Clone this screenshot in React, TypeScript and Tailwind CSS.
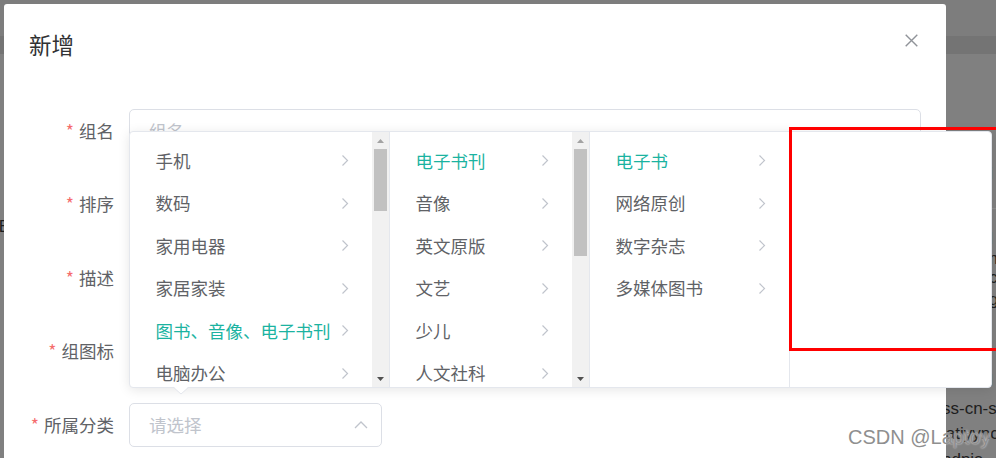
import React from 'react';

const cjk = "font-['Noto_Sans_CJK_SC','Noto_Sans',sans-serif]";

type Panel = {
  items: string[];
  active?: number;
  width: string;
  thumb?: string;
  last?: boolean;
};

const panels: Panel[] = [
  {
    items: ['手机', '数码', '家用电器', '家居家装', '图书、音像、电子书刊', '电脑办公', '汽车用品', '母婴'],
    active: 4,
    width: 'w-[260px]',
    thumb: 'h-[62px]',
  },
  {
    items: ['电子书刊', '音像', '英文原版', '文艺', '少儿', '人文社科', '经管励志'],
    active: 0,
    width: 'w-[200px]',
    thumb: 'h-[107px]',
  },
  {
    items: ['电子书', '网络原创', '数字杂志', '多媒体图书'],
    active: 0,
    width: 'w-[200px]',
  },
  { items: [], width: 'w-[201px]', last: true },
];

function ChevronRight() {
  return (
    <svg width="8" height="13" viewBox="0 0 8 13" className="shrink-0">
      <path d="M1.5 1.5 L6.5 6.5 L1.5 11.5" fill="none" stroke="#C0C4CC" strokeWidth="1.2" />
    </svg>
  );
}

function Scrollbar({ thumb }: { thumb: string }) {
  return (
    <div className="w-[17px] h-full bg-[#F1F1F1] flex flex-col shrink-0">
      <div className="h-[17px] flex items-center justify-center">
        <svg width="7" height="4" viewBox="0 0 7 4">
          <polygon points="0,4 7,4 3.5,0" fill="#A3A3A3" />
        </svg>
      </div>
      <div className={`${thumb} mx-[2px] bg-[#C1C1C1]`} />
      <div className="flex-1" />
      <div className="h-[17px] flex items-center justify-center">
        <svg width="7" height="4" viewBox="0 0 7 4">
          <polygon points="0,0 7,0 3.5,4" fill="#505050" />
        </svg>
      </div>
    </div>
  );
}

function CascaderPanel({ panel }: { panel: Panel }) {
  return (
    <div className={`${panel.width} h-full flex ${panel.last ? '' : 'border-r border-[#E4E7ED]'}`}>
      <div className="flex-1 overflow-hidden pt-[7.5px]">
        {panel.items.map((item, i) => (
          <div
            key={item}
            className={`h-[42.5px] flex items-center justify-between pl-[25.5px] pr-[23px] text-[17.5px] whitespace-nowrap ${
              i === panel.active ? 'text-[#1bb3a1]' : 'text-[#606266]'
            }`}
          >
            <span>{item}</span>
            <ChevronRight />
          </div>
        ))}
      </div>
      {panel.thumb && <Scrollbar thumb={panel.thumb} />}
    </div>
  );
}

function FormRow({ label, children }: { label: string; children: React.ReactNode }) {
  return (
    <div className="flex h-[44px] mb-[29.5px]">
      <div className="w-[100px] pr-[15px] flex items-center justify-end text-[17.5px] text-[#606266] whitespace-nowrap">
        <span className="text-[#F56C6C] mr-[5px]">*</span>
        {label}
      </div>
      {children}
    </div>
  );
}

function TextInput({ placeholder }: { placeholder?: string }) {
  return (
    <div className="flex-1 border border-[#DCDFE6] rounded-[5px] px-[19px] flex items-center text-[17.5px] text-[#C0C4CC]">
      {placeholder}
    </div>
  );
}

export default function App() {
  return (
    <div className={`relative w-[996px] h-[458px] overflow-hidden bg-[#808080] ${cjk}`}>
      {/* page behind the mask */}
      <div className="absolute inset-0 flex flex-col">
        <div className="h-[36px] bg-[#7d7d7d]" />
        <div className="h-[18px] bg-[#747474]" />
        <div className="flex-1" />
      </div>
      <div className="absolute left-[-5px] top-[214px] text-[17px] text-[#1e1e1e] font-['Liberation_Sans',sans-serif]">
        iE
      </div>
      <div className="absolute left-[989px] top-[162px] flex flex-col text-[17px] text-[#1e1e1e] font-['Liberation_Sans',sans-serif] leading-none">
        <div className="h-[22px] flex items-center">i</div>
        <div className="h-[25px] border-b border-[#8e8e8e]" />
        <div className="h-[19px]" />
        <div className="h-[20px] flex items-center">l</div>
        <div className="h-[20px] flex items-center">m</div>
        <div className="h-[19px] flex items-center">c</div>
        <div className="h-[25px] flex items-center">g</div>
        <div className="h-[58px]" />
        <div className="h-[20px] flex items-center">l</div>
      </div>
      <div className="absolute left-[942px] top-[396px] flex flex-col text-[17px] text-[#1e1e1e] font-['Liberation_Sans',sans-serif] leading-none whitespace-nowrap">
        <div className="h-[24px] flex items-center">ss-cn-shanghai</div>
        <div className="h-[26px] flex items-center">latiyyncd</div>
        <div className="h-[26px] flex items-center">ndnis</div>
      </div>

      {/* dialog */}
      <div className="absolute left-[4px] top-[4px] w-[942px] h-[490px] bg-white rounded-[3px]">
        <div className="pt-[25px] px-[25px] pb-[12.5px]">
          <div className="h-[30px] leading-[30px] text-[22.5px] text-[#303133]">新增</div>
        </div>
        <div className="absolute top-[30px] right-[28px]">
          <svg width="13" height="13" viewBox="0 0 13 13">
            <path d="M0.7 0.7 L12.3 12.3 M12.3 0.7 L0.7 12.3" stroke="#909399" strokeWidth="1.4" />
          </svg>
        </div>
        <div className="px-[25px] pt-[37.5px]">
          <FormRow label="组名">
            <TextInput placeholder="组名" />
          </FormRow>
          <FormRow label="排序">
            <TextInput />
          </FormRow>
          <FormRow label="描述">
            <TextInput />
          </FormRow>
          <FormRow label="组图标">
            <TextInput />
          </FormRow>
          <FormRow label="所属分类">
            <div className="w-[253px] border border-[#DCDFE6] rounded-[5px] pl-[19px] pr-[13px] flex items-center justify-between text-[17.5px] text-[#C0C4CC]">
              <span>请选择</span>
              <svg width="14" height="8" viewBox="0 0 14 8">
                <path d="M1 7 L7 1 L13 7" fill="none" stroke="#C0C4CC" strokeWidth="1.3" />
              </svg>
            </div>
          </FormRow>
        </div>
      </div>

      {/* cascader dropdown */}
      <div className="absolute left-[129px] top-[131px] h-[257px] flex bg-white border border-[#E4E7ED] rounded-[4px] shadow-[0_2px_12px_0_rgba(0,0,0,0.1)]">
        {panels.map((p, i) => (
          <CascaderPanel key={i} panel={p} />
        ))}
        <svg width="16" height="9" viewBox="0 0 16 9" className="absolute left-[43px] top-[254px]">
          <polygon points="0,0 16,0 8,8" fill="#ffffff" />
          <path d="M0 1 L8 8 L16 1" fill="none" stroke="#E4E7ED" strokeWidth="1" />
        </svg>
      </div>

      {/* highlight box */}
      <div className="absolute left-[789px] top-[127px] w-[220px] h-[224px] border-[3px] border-[#FF0000]" />

      {/* watermark */}
      <div className="absolute left-[848px] top-[425px] text-[20px] leading-[24px] text-[#8f8f8f] font-['Liberation_Sans',sans-serif] [text-shadow:0_0_2px_rgba(255,255,255,0.8)] whitespace-nowrap">
        CSDN @Laptoy
      </div>
    </div>
  );
}
